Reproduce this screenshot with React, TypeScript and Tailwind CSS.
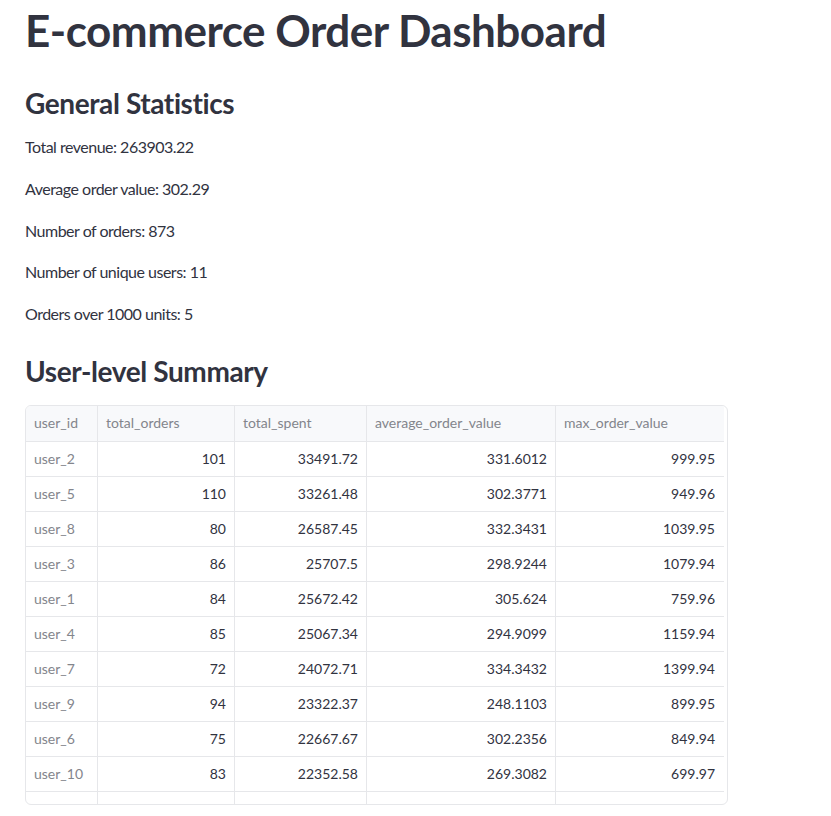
const rows = [
  ["user_2", "101", "33491.72", "331.6012", "999.95"],
  ["user_5", "110", "33261.48", "302.3771", "949.96"],
  ["user_8", "80", "26587.45", "332.3431", "1039.95"],
  ["user_3", "86", "25707.5", "298.9244", "1079.94"],
  ["user_1", "84", "25672.42", "305.624", "759.96"],
  ["user_4", "85", "25067.34", "294.9099", "1159.94"],
  ["user_7", "72", "24072.71", "334.3432", "1399.94"],
  ["user_9", "94", "23322.37", "248.1103", "899.95"],
  ["user_6", "75", "22667.67", "302.2356", "849.94"],
  ["user_10", "83", "22352.58", "269.3082", "699.97"],
  ["", "", "", "", ""],
]

const columns = ["user_id", "total_orders", "total_spent", "average_order_value", "max_order_value"]
const widths = ["w-[71px]", "w-[137px]", "w-[132px]", "w-[189px]", "w-[168px]"]

const stats = [
  "Total revenue: 263903.22",
  "Average order value: 302.29",
  "Number of orders: 873",
  "Number of unique users: 11",
  "Orders over 1000 units: 5",
]

export default function App() {
  return (
    <div className="min-h-[816px] bg-white px-[25px] pt-[1px] text-[#31333f] font-['Lato','Open_Sans',sans-serif]">
      <h1 className="mt-[3px] text-[44px] font-bold leading-[1.2] tracking-[-0.5px]">E-commerce Order Dashboard</h1>

      <h2 className="mt-[30px] text-[28px] font-bold leading-[1.2] tracking-[-0.4px]">General Statistics</h2>
      <div className="mt-[14px]">
        {stats.map((s) => (
          <p key={s} className="mb-4 text-base leading-[1.6] tracking-[-0.5px]">{s}</p>
        ))}
      </div>

      <h2 className="mt-[29px] text-[28px] font-bold leading-[1.2] tracking-[-0.4px]">User-level Summary</h2>

      {/* dataframe */}
      <div className="mt-[16px] h-[400px] w-[703px] overflow-hidden rounded-md border border-[#e6e7ea] text-sm">
        <div className="flex h-[36px] w-[698px] border-b border-[#e6e7ea] bg-[#f8f9fb] text-[#83858c]">
          {columns.map((c, i) => (
            <div
              key={c}
              className={`${widths[i]} flex items-center px-2 ${i > 0 ? "border-l border-[#e6e7ea]" : ""}`}
            >
              {c}
            </div>
          ))}
        </div>
        {rows.map((r, ri) => (
          <div key={ri} className="flex h-[35px] w-[698px] border-b border-[#e6e7ea]">
            {r.map((v, i) => (
              <div
                key={i}
                className={`${widths[i]} flex items-center px-2 ${
                  i === 0 ? "text-[#83858c]" : "justify-end border-l border-[#e6e7ea]"
                }`}
              >
                {v}
              </div>
            ))}
          </div>
        ))}
      </div>
    </div>
  )
}
